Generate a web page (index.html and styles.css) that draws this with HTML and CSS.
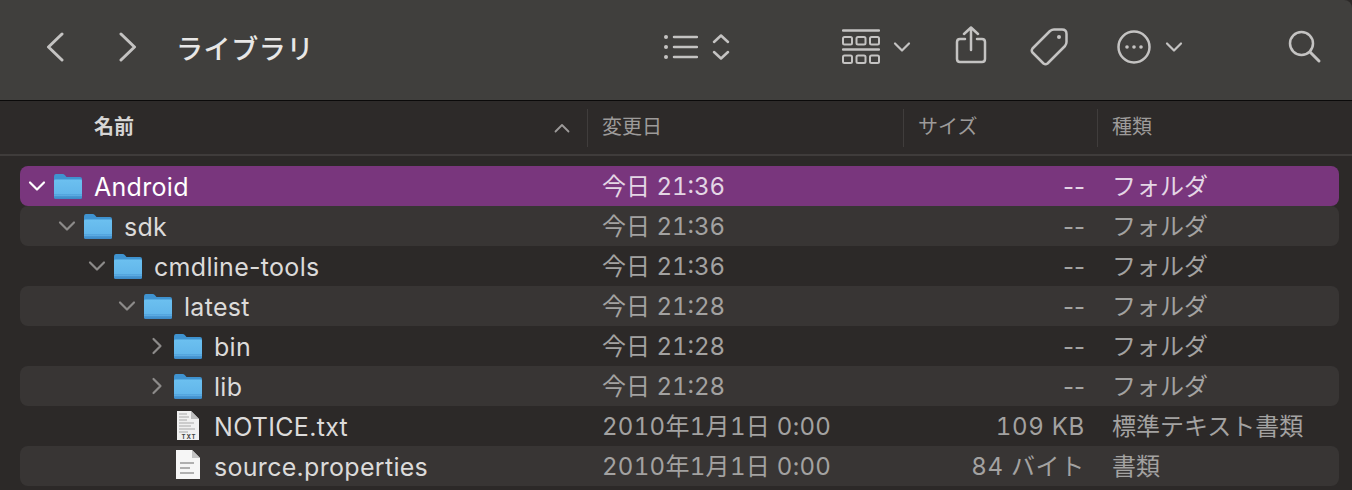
FILE: index.html
```html
<!DOCTYPE html>
<html lang="ja">
<head>
    <meta charset="UTF-8">
    <meta name="viewport" content="width=device-width, initial-scale=1.0">
    <title>ライブラリ</title>
    <link rel="stylesheet" href="styles.css">
</head>
<body>

    <!-- shared icons -->
    <svg class="defs" width="0" height="0">
        <defs>
            <linearGradient id="folder-body" x1="0" y1="0" x2="0" y2="1">
                <stop offset="0" stop-color="#6cc0f0"/>
                <stop offset="0.72" stop-color="#62b6ea"/>
                <stop offset="0.74" stop-color="#4fa2dc"/>
                <stop offset="0.82" stop-color="#5cabe2"/>
                <stop offset="0.85" stop-color="#4898d4"/>
                <stop offset="1" stop-color="#3c89c6"/>
            </linearGradient>
            <symbol id="folder" viewBox="0 0 30 28">
                <path d="M1 5 Q1 2 3 2 H9.500 Q11 2 12 3.200 L13.500 5 H27 Q29 5 29 7 V10 H1 Z" fill="#3f93d0"/>
                <path d="M1 8.500 Q1 7.500 2.500 7.500 H27.500 Q29 7.500 29 8.500 V25.500 Q29 27 27.500 27 H2.500 Q1 27 1 25.500 Z" fill="url(#folder-body)"/>
            </symbol>
            <symbol id="chevron-down" viewBox="0 0 18 12">
                <path d="M2 2.500 L9 9.500 L16 2.500" fill="none" stroke="currentColor" stroke-width="2.200" stroke-linecap="round" stroke-linejoin="round"/>
            </symbol>
            <symbol id="chevron-right" viewBox="0 0 12 18">
                <path d="M2.500 2 L9.500 9 L2.500 16" fill="none" stroke="currentColor" stroke-width="2.200" stroke-linecap="round" stroke-linejoin="round"/>
            </symbol>
        </defs>
    </svg>

    <header class="toolbar">
        <svg class="tool-back" width="18" height="30" viewBox="0 0 18 30"><path d="M16 2 L2.500 15 L16 28" class="line"/></svg>
        <svg class="tool-forward" width="18" height="30" viewBox="0 0 18 30"><path d="M2 2 L15.500 15 L2 28" class="line"/></svg>
        <h1 class="title">ライブラリ</h1>

        <svg class="tool-list" width="34" height="28" viewBox="0 0 34 28">
            <circle cx="2" cy="4" r="2" class="dot"/><circle cx="2" cy="14" r="2" class="dot"/><circle cx="2" cy="24" r="2" class="dot"/>
            <path d="M10 4 H33 M10 14 H33 M10 24 H33" class="thin"/>
        </svg>
        <svg class="tool-updown" width="18" height="30" viewBox="0 0 18 30"><path d="M2 10 L9 3.500 L16 10 M2 20 L9 26.500 L16 20" class="thin"/></svg>

        <svg class="tool-gallery" width="38" height="36" viewBox="0 0 38 36">
            <path d="M1 1.500 H37 M1 20.500 H37" class="thin"/>
            <rect x="1" y="8" width="9" height="7.500" rx="1.500" class="hair"/><rect x="14.500" y="8" width="9" height="7.500" rx="1.500" class="hair"/><rect x="28" y="8" width="9" height="7.500" rx="1.500" class="hair"/>
            <rect x="1" y="26.500" width="9" height="7.500" rx="1.500" class="hair"/><rect x="14.500" y="26.500" width="9" height="7.500" rx="1.500" class="hair"/><rect x="28" y="26.500" width="9" height="7.500" rx="1.500" class="hair"/>
        </svg>
        <svg class="tool-caret" width="18" height="12" viewBox="0 0 18 12"><use href="#chevron-down"/></svg>

        <svg class="tool-share" width="32" height="38" viewBox="0 0 32 38">
            <path d="M16 24 V2 M9 8 L16 1.500 L23 8" class="thin"/>
            <path d="M10 13 H5 Q2 13 2 16 V33 Q2 36 5 36 H27 Q30 36 30 33 V16 Q30 13 27 13 H22" class="thin"/>
        </svg>
        <svg class="tool-tag" width="38" height="38" viewBox="0 0 38 38">
            <path d="M24 1.500 H32 Q36.500 1.500 36.500 6 V14 Q36.500 16 35 18 L17.500 35.500 Q15.500 37 13.500 35.500 L2.500 24.500 Q1 22.500 2.500 20.500 L20 3 Q22 1.500 24 1.500 Z" class="thin"/>
            <circle cx="29" cy="9" r="2" class="dot"/>
        </svg>
        <svg class="tool-more" width="34" height="36" viewBox="0 0 34 36">
            <circle cx="17" cy="18" r="15.500" class="thin"/>
            <circle cx="10" cy="18" r="1.800" class="dot"/><circle cx="17" cy="18" r="1.800" class="dot"/><circle cx="24" cy="18" r="1.800" class="dot"/>
        </svg>
        <svg class="tool-caret-more" width="18" height="12" viewBox="0 0 18 12"><use href="#chevron-down"/></svg>
        <svg class="tool-search" width="34" height="34" viewBox="0 0 34 34">
            <circle cx="13.500" cy="13.500" r="11.500" class="thin"/>
            <path d="M22 22 L31 31" class="line"/>
        </svg>
    </header>

    <div class="columns">
        <div class="col col-name">名前
            <svg class="sort-caret" width="16" height="10" viewBox="0 0 16 10"><path d="M1.500 8.500 L8 2 L14.500 8.500"/></svg>
        </div>
        <div class="col">変更日</div>
        <div class="col">サイズ</div>
        <div class="col">種類</div>
    </div>

    <div class="file-list">
        <div class="row selected depth-0">
            <div class="name"><svg class="arrow-down"><use href="#chevron-down"/></svg><svg class="icon"><use href="#folder"/></svg>Android</div>
            <div class="date">今日 21:36</div><div class="size">--</div><div class="kind">フォルダ</div>
        </div>
        <div class="row depth-1">
            <div class="name"><svg class="arrow-down"><use href="#chevron-down"/></svg><svg class="icon"><use href="#folder"/></svg>sdk</div>
            <div class="date">今日 21:36</div><div class="size">--</div><div class="kind">フォルダ</div>
        </div>
        <div class="row depth-2">
            <div class="name"><svg class="arrow-down"><use href="#chevron-down"/></svg><svg class="icon"><use href="#folder"/></svg>cmdline-tools</div>
            <div class="date">今日 21:36</div><div class="size">--</div><div class="kind">フォルダ</div>
        </div>
        <div class="row depth-3">
            <div class="name"><svg class="arrow-down"><use href="#chevron-down"/></svg><svg class="icon"><use href="#folder"/></svg>latest</div>
            <div class="date">今日 21:28</div><div class="size">--</div><div class="kind">フォルダ</div>
        </div>
        <div class="row depth-4">
            <div class="name"><svg class="arrow-right"><use href="#chevron-right"/></svg><svg class="icon"><use href="#folder"/></svg>bin</div>
            <div class="date">今日 21:28</div><div class="size">--</div><div class="kind">フォルダ</div>
        </div>
        <div class="row depth-4">
            <div class="name"><svg class="arrow-right"><use href="#chevron-right"/></svg><svg class="icon"><use href="#folder"/></svg>lib</div>
            <div class="date">今日 21:28</div><div class="size">--</div><div class="kind">フォルダ</div>
        </div>
        <div class="row file depth-4">
            <div class="name">
                <span class="arrow-none"></span>
                <svg class="icon" viewBox="0 0 30 34">
                    <path d="M4 2 H18 L26 10 V31 H4 Z" fill="#f0f0f0"/>
                    <path d="M18 2 L26 10 H18 Z" fill="#bdbdbd"/>
                    <path d="M6 5 H14 M6 8 H16 M6 11 H14 M6 14 H21 M6 17 H18 M6 20 H22 M6 23 H15" stroke="#c0c0c0" stroke-width="1.500"/>
                    <text x="16" y="30" class="txt-badge">TXT</text>
                </svg>NOTICE.txt
            </div>
            <div class="date">2010年1月1日 0:00</div><div class="size">109 KB</div><div class="kind">標準テキスト書類</div>
        </div>
        <div class="row file depth-4">
            <div class="name">
                <span class="arrow-none"></span>
                <svg class="icon" viewBox="0 0 30 34">
                    <path d="M3 1 H19 L27 9 V30 H3 Z" fill="#f6f6f6"/>
                    <path d="M19 1 L27 9 H19 Z" fill="#c4c4c4"/>
                    <path d="M7 14 H21 M7 19 H17 M7 24 H21" stroke="#b0b0b0" stroke-width="1.800"/>
                </svg>source.properties
            </div>
            <div class="date">2010年1月1日 0:00</div><div class="size">84 バイト</div><div class="kind">書類</div>
        </div>
    </div>

</body>
</html>
```

FILE: styles.css
```css
html, body {
    margin: 0;
    padding: 0;
    height: 490px;
    overflow: hidden;
}

body {
    font-family: Inter, "Noto Sans CJK JP", sans-serif;
    background-color: #2c2928;
    color: #dcdbda;
}

.defs {
    display: block;
    height: 0;
}

/* toolbar */
.toolbar {
    height: 100px;
    box-sizing: border-box;
    padding-bottom: 6px;
    display: flex;
    align-items: center;
    background-color: #403f3d;
    border-top-right-radius: 8px;
    color: #c4c3c2;
}

.toolbar svg {
    flex: none;
}

.toolbar .line {
    fill: none;
    stroke: #c4c3c2;
    stroke-width: 3;
    stroke-linecap: round;
    stroke-linejoin: round;
}

.toolbar .thin {
    fill: none;
    stroke: #c4c3c2;
    stroke-width: 2.500;
    stroke-linecap: round;
    stroke-linejoin: round;
}

.toolbar .hair {
    fill: none;
    stroke: #c4c3c2;
    stroke-width: 2;
}

.toolbar .dot {
    fill: #c4c3c2;
}

.tool-back { margin-left: 46px; }
.tool-forward { margin-left: 55px; }

.title {
    margin: 0 0 0 39px;
    width: 134px;
    font-size: 27px;
    font-weight: 500;
    letter-spacing: 0.6px;
    white-space: nowrap;
    color: #e8e7e6;
}

.tool-list { margin-left: 354px; }
.tool-updown { margin-left: 14px; }
.tool-gallery { margin-left: 112px; }
.tool-caret { margin-left: 13px; }
.tool-share { margin-left: 44px; margin-top: -4px; }
.tool-tag { margin-left: 43px; }
.tool-more { margin-left: 49px; }
.tool-caret-more { margin-left: 14px; }
.tool-search { margin-left: 105px; }

/* column header */
.columns {
    height: 53px;
    display: grid;
    grid-template-columns: 567px 316px 194px 1fr;
    padding-left: 20px;
    background-color: #2d2a29;
    border-top: 1px solid #0b0a0a;
    border-bottom: 2px solid #3f3c3b;
    align-items: center;
    font-size: 20px;
    color: #9d9b9a;
}

.col {
    height: 38px;
    line-height: 36px;
    padding-left: 14px;
    border-left: 1px solid #403d3c;
}

.col-name {
    position: relative;
    padding-left: 74px;
    border-left: none;
    font-weight: 700;
    color: #d6d5d4;
}

.sort-caret {
    position: absolute;
    right: 17px;
    top: 14px;
    fill: none;
    stroke: #9d9b9a;
    stroke-width: 1.800;
    stroke-linecap: round;
    stroke-linejoin: round;
}

/* file rows */
.file-list {
    padding: 10px 13px 0 20px;
}

.row {
    height: 40px;
    display: grid;
    grid-template-columns: 567px 316px 194px 1fr;
    align-items: center;
    border-radius: 8px;
    font-size: 24px;
    line-height: 38px;
    color: #a3a2a1;
    white-space: nowrap;
}

.row:nth-child(even) {
    background-color: #383534;
}

.row.selected {
    background-color: #79367d;
    color: #e4d6e5;
}

.name {
    display: flex;
    align-items: center;
    box-sizing: border-box;
    height: 40px;
    padding-top: 2px;
    font-size: 25px;
    letter-spacing: 0.3px;
    color: #dcdbda;
}

.name svg {
    margin-top: -2px;
}

.selected .name {
    color: #ffffff;
}

.depth-0 .name { padding-left: 8px; }
.depth-1 .name { padding-left: 38px; }
.depth-2 .name { padding-left: 68px; }
.depth-3 .name { padding-left: 98px; }
.depth-4 .name { padding-left: 128px; }

.arrow-down {
    width: 18px;
    height: 12px;
    margin-right: 7px;
    color: #8d8b8a;
}

.arrow-right {
    width: 18px;
    height: 18px;
    margin-right: 7px;
    color: #8d8b8a;
}

.arrow-none {
    width: 25px;
}

.selected .arrow-down {
    color: #ffffff;
}

.icon {
    width: 30px;
    height: 34px;
    margin-right: 11px;
    flex: none;
}

.txt-badge {
    font-size: 6px;
    font-weight: 700;
    letter-spacing: 1px;
    text-anchor: middle;
    fill: #444444;
}

.date {
    padding-left: 15px;
    padding-top: 2px;
    font-variant-numeric: tabular-nums;
}

.size {
    text-align: right;
    padding-right: 12px;
    padding-top: 2px;
}

.file .date {
    letter-spacing: 0.3px;
}

.file .size {
    font-variant-numeric: tabular-nums;
    letter-spacing: 0.7px;
}

.kind {
    padding-left: 15px;
    padding-top: 2px;
}
```
